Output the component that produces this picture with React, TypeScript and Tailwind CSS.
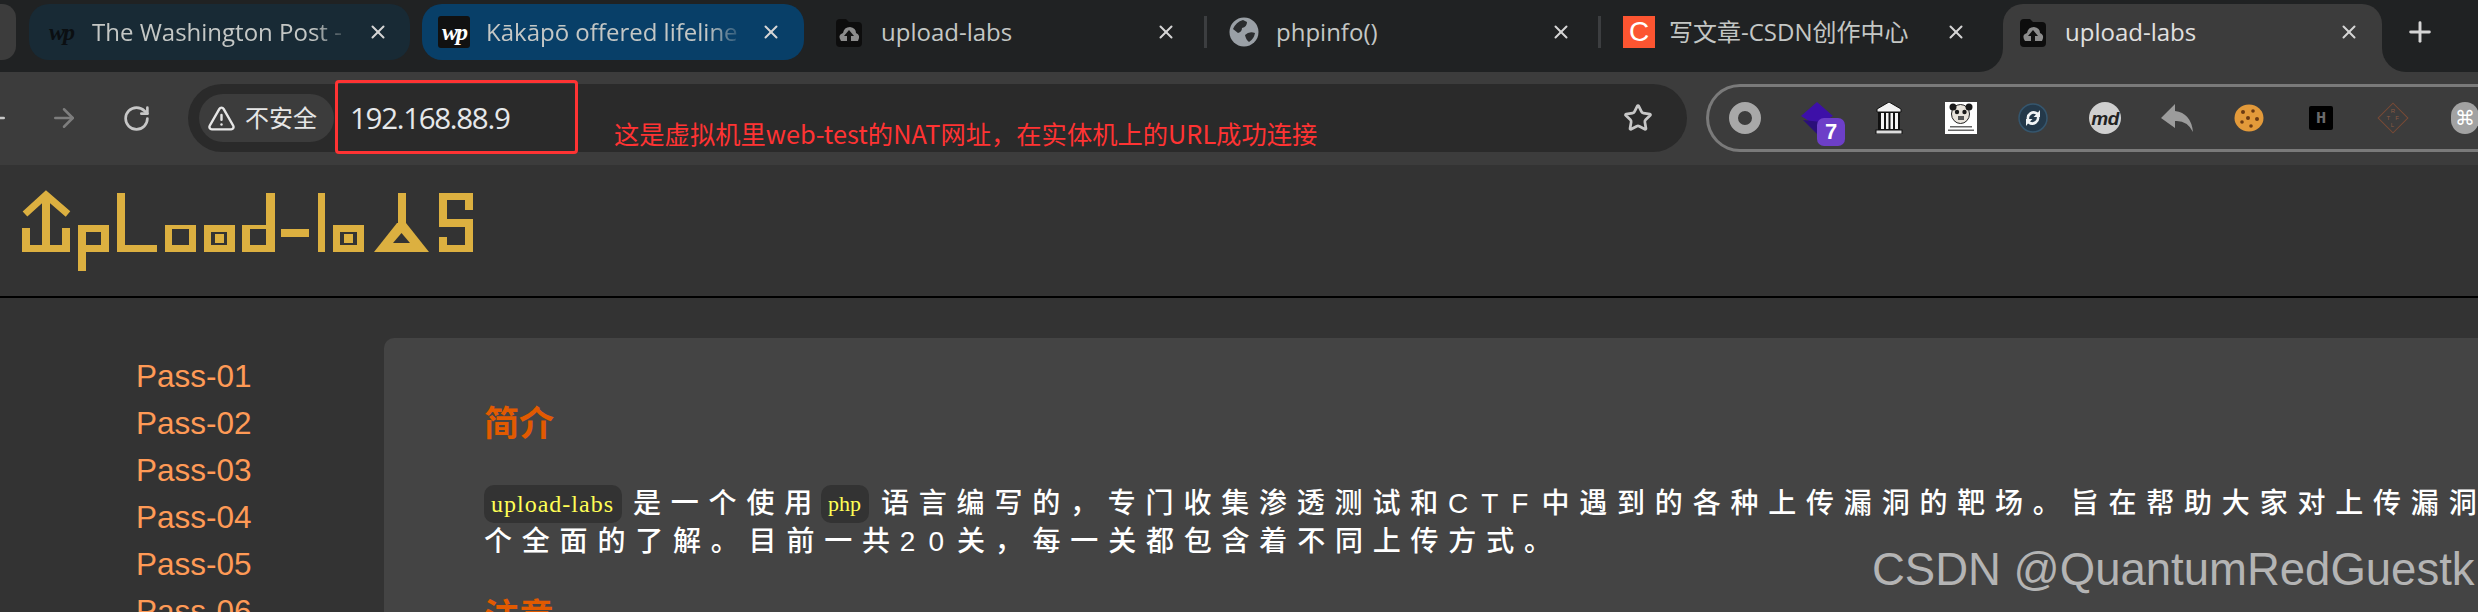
import { ArrowLeft, ArrowRight, Plus, RotateCw, Star, TriangleAlert, X } from "lucide-react";
import type { ReactNode } from "react";

const UI = "font-['Open_Sans','Noto_Sans_CJK_SC',sans-serif]";

function WpIcon({ boxed }: { boxed?: boolean }) {
  return (
    <span
      className={`flex h-8 w-8 shrink-0 items-center justify-center rounded-[3px] font-['Liberation_Serif',serif] text-[24px] font-bold italic leading-none tracking-[-2px] ${
        boxed ? "bg-[#111111] text-white" : "text-[#0b0f12]"
      }`}
    >
      wp
    </span>
  );
}

function LabsIcon() {
  return (
    <svg width="32" height="32" viewBox="0 0 32 32" className="shrink-0">
      <path d="M3 7 Q3 3 7 3 H13 L16 6 H25 Q29 6 29 10 V27 Q29 31 25 31 H7 Q3 31 3 27 Z" fill="#0d0d0d" />
      <path d="M8 25 Q4 19 10 17 Q11 11 17 11 Q23 12 23 17 Q28 19 25 25 Z" fill="#8c8c8c" />
      <path d="M16 14 L21 20 H18 V26 H14 V20 H11 Z" fill="#111111" />
    </svg>
  );
}

function GlobeIcon() {
  return (
    <svg width="32" height="32" viewBox="0 0 32 32" className="shrink-0">
      <circle cx="16" cy="16" r="14.5" fill="#9aa0a6" />
      <path d="M15 4 Q8 6 5 13 L10 17 Q14 16 14 12 Q19 11 19 6 Z" fill="#2a2c2e" />
      <path d="M27 17 Q21 15 17 19 Q18 24 21 26 Q26 23 27 17 Z" fill="#2a2c2e" />
    </svg>
  );
}

function CsdnIcon() {
  return (
    <span className="flex h-8 w-8 shrink-0 items-center justify-center bg-[#fc5531] font-['Liberation_Sans',sans-serif] text-[28px] leading-none text-white">
      C
    </span>
  );
}

function Tab({
  icon,
  title,
  className,
  fade,
  titleClass = "ml-4",
  closeClass = "ml-1",
  children,
}: {
  icon: ReactNode;
  title: string;
  className: string;
  fade?: boolean;
  titleClass?: string;
  closeClass?: string;
  children?: ReactNode;
}) {
  return (
    <div className={`relative flex h-14 shrink-0 items-center ${className}`}>
      {icon}
      <span
        className={`${titleClass} w-[270px] overflow-hidden whitespace-nowrap text-[24px] leading-[30px] ${
          fade ? "[mask-image:linear-gradient(to_right,black_82%,transparent_96%)]" : ""
        }`}
      >
        {title}
      </span>
      <X size={22} strokeWidth={2.2} className={`${closeClass} shrink-0 text-[#d5d5d5]`} />
      {children}
    </div>
  );
}

function Sep({ className }: { className: string }) {
  return <span className={`mt-[12px] h-8 w-[3px] shrink-0 self-start bg-[#3c3e40] ${className}`} />;
}

function Slot({ children }: { children: ReactNode }) {
  return <div className="relative flex h-[62px] w-[72px] shrink-0 items-center justify-center">{children}</div>;
}

function Extensions() {
  return (
    <div className="ml-[19px] flex h-[68px] w-[900px] shrink-0 items-center rounded-l-[34px] border-[3px] border-r-0 border-[#7a7a7a]">
      <Slot>
        <svg width="32" height="32" viewBox="0 0 32 32">
          <circle cx="16" cy="16" r="11.5" fill="none" stroke="#a8a8a8" strokeWidth="9" />
        </svg>
      </Slot>
      <Slot>
        <svg width="32" height="32" viewBox="0 0 32 32">
          <path d="M16 0 L32 14 L16 24 L0 14 Z" fill="#3d10a8" />
          <path d="M2 18 L16 32 L20 20 Z" fill="#2a0f7a" />
        </svg>
        <span className="absolute left-[36px] top-[31px] flex h-7 w-7 items-center justify-center rounded-[7px] bg-[#6d3fc8] font-['Liberation_Sans',sans-serif] text-[22px] font-bold leading-none text-white">
          7
        </span>
      </Slot>
      <Slot>
        <svg width="28" height="32" viewBox="0 0 28 32">
          <path d="M14 0 L26 7 V10 H2 V7 Z" fill="#f2f2f2" stroke="#111" strokeWidth="1" />
          <rect x="3" y="10" width="22" height="18" fill="#111" />
          <rect x="6" y="11" width="3" height="16" fill="#f2f2f2" />
          <rect x="11" y="11" width="2.5" height="16" fill="#f2f2f2" />
          <rect x="15.5" y="11" width="2.5" height="16" fill="#f2f2f2" />
          <rect x="20" y="11" width="3" height="16" fill="#f2f2f2" />
          <rect x="1" y="28" width="26" height="4" fill="#dddddd" stroke="#111" strokeWidth="1" />
        </svg>
      </Slot>
      <Slot>
        <svg width="32" height="32" viewBox="0 0 32 32">
          <rect width="32" height="32" fill="#ffffff" />
          <ellipse cx="15.5" cy="12" rx="9" ry="9.5" fill="#e9e4dc" stroke="#222" strokeWidth="1" />
          <circle cx="8" cy="5" r="3.5" fill="#1a1a1a" />
          <circle cx="24" cy="5" r="3.5" fill="#1a1a1a" />
          <circle cx="12" cy="10" r="2.2" fill="#1a1a1a" />
          <circle cx="19.5" cy="10" r="2.2" fill="#1a1a1a" />
          <rect x="13" y="14" width="6" height="4" fill="#555" />
          <rect x="5" y="24" width="22" height="1.5" fill="#666" />
          <rect x="3" y="27.5" width="26" height="1.5" fill="#666" />
        </svg>
      </Slot>
      <Slot>
        <svg width="30" height="30" viewBox="0 0 30 30">
          <circle cx="15" cy="15" r="14" fill="#24394a" stroke="#35566e" strokeWidth="1.5" />
          <path d="M9 17 A7 7 0 0 1 20 9.5 L22 7 V14 H15.5 L18 11.5 A4.5 4.5 0 0 0 11.5 17 Z" fill="#f1f4f6" />
          <path d="M21 13 A7 7 0 0 1 10 20.5 L8 23 V16 H14.5 L12 18.5 A4.5 4.5 0 0 0 18.5 13 Z" fill="#f1f4f6" />
        </svg>
      </Slot>
      <Slot>
        <span className="flex h-8 w-8 items-center justify-center rounded-full bg-[#cfcfcf] font-['Liberation_Sans',sans-serif] text-[19px] font-bold italic leading-none tracking-[-0.5px] text-[#222222]">
          md
        </span>
      </Slot>
      <Slot>
        <svg width="32" height="28" viewBox="0 0 32 28">
          <path d="M14 0 L0 14 L14 24 V17 Q26 16 32 28 Q30 9 14 7 Z" fill="#9c9c9c" />
        </svg>
      </Slot>
      <Slot>
        <svg width="30" height="28" viewBox="0 0 30 28">
          <ellipse cx="15" cy="14" rx="14.5" ry="13.5" fill="#e39a3a" />
          <circle cx="9" cy="8" r="2" fill="#6b3a12" />
          <circle cx="19" cy="7" r="1.8" fill="#6b3a12" />
          <circle cx="14" cy="14" r="2" fill="#6b3a12" />
          <circle cx="23" cy="15" r="2" fill="#6b3a12" />
          <circle cx="8" cy="18" r="1.8" fill="#6b3a12" />
          <circle cx="17" cy="22" r="1.8" fill="#6b3a12" />
        </svg>
      </Slot>
      <Slot>
        <span className="flex h-6 w-6 items-center justify-center rounded-[2px] bg-black font-['Liberation_Mono',monospace] text-[17px] font-bold leading-none text-[#6a6a6a]">
          H
        </span>
      </Slot>
      <Slot>
        <span className="relative flex h-8 w-8 items-center justify-center">
          <span className="absolute h-[22px] w-[22px] rotate-45 border border-[#7a4a35]" />
          <span className="relative grid grid-cols-3 grid-rows-3 font-['Liberation_Sans',sans-serif] text-[6px] leading-[7px] text-[#8a5a42]">
            <span />
            <span>R</span>
            <span />
            <span>T</span>
            <span />
            <span>F</span>
            <span />
            <span>L</span>
            <span />
          </span>
        </span>
      </Slot>
      <Slot>
        <span className="flex h-8 w-[28px] items-center justify-center rounded-full bg-[#a2a2a2] font-['DejaVu_Sans',sans-serif] text-[20px] leading-none text-white">
          ⌘
        </span>
      </Slot>
    </div>
  );
}

function Logo() {
  const c = "#dcb040";
  const boxes: [number, number, number, number][] = [
    [42, 195, 8, 57], [22, 228, 8, 24], [62, 228, 8, 24], [22, 245, 48, 7],
    [78, 225, 8, 46], [78, 225, 31, 7], [101, 225, 8, 27], [78, 245, 31, 7],
    [117, 193, 8, 59], [117, 245, 40, 7],
    [165, 225, 31, 27], [204, 225, 31, 27], [242, 225, 33, 27], [266, 193, 9, 59],
    [281, 229, 28, 8], [318, 193, 7, 59], [333, 225, 31, 27],
    [398, 193, 8, 34],
    [439, 193, 34, 7], [439, 193, 8, 34], [439, 219, 34, 8], [465, 193, 8, 17], [465, 219, 8, 33], [439, 245, 34, 7], [439, 237, 8, 15],
  ];
  const holes: [number, number, number, number][] = [
    [172, 229, 17, 16], [211, 232, 16, 13], [250, 229, 16, 16], [340, 232, 17, 13],
  ];
  const dots: [number, number, number, number][] = [[215, 234, 9, 9], [344, 234, 9, 9]];
  return (
    <svg width="460" height="85" viewBox="20 190 460 85" role="img" aria-label="upload-labs logo" className="ml-5 block">
      <path d="M25 214 L46 195 L68 214" fill="none" stroke={c} strokeWidth="7" />
      {boxes.map(([x, y, w, h], i) => <rect key={i} x={x} y={y} width={w} height={h} fill={c} />)}
      {holes.map(([x, y, w, h], i) => <rect key={i} x={x} y={y} width={w} height={h} fill="#333333" />)}
      {dots.map(([x, y, w, h], i) => <rect key={i} x={x} y={y} width={w} height={h} fill={c} />)}
      <path d="M397 223 H406 L429 252 H374 Z" fill={c} />
      <path d="M401.5 233 L410 243 H393 Z" fill="#333333" />
    </svg>
  );
}

function Chip({ children, className }: { children: string; className: string }) {
  return (
    <span className={`inline-block h-[38px] rounded-[10px] bg-[#333333] px-[7px] align-top font-['Liberation_Serif',serif] font-normal leading-[38px] text-[#ffff55] ${className}`}>
      {children}
    </span>
  );
}

function Latin({ children }: { children: string }) {
  return <span className="tracking-[13px]">{children}</span>;
}

export default function App() {
  const passes = ["Pass-01", "Pass-02", "Pass-03", "Pass-04", "Pass-05", "Pass-06"];
  return (
    <div className={`relative h-[612px] w-[2478px] overflow-hidden bg-[#333333] ${UI}`}>
      {/* tab strip */}
      <div className="flex h-[72px] items-start overflow-hidden bg-[#202223] pt-1 text-[#c4c7c5]">
        <div className="h-14 w-4 shrink-0 rounded-r-[14px] bg-[#3c3c3c]" />
        <Tab
          fade
          icon={<WpIcon />}
          title="The Washington Post -"
          titleClass="ml-[15px]"
          closeClass="ml-[5px]"
          className="ml-[13px] w-[381px] rounded-[20px] bg-[#182a35] pl-4"
        />
        <Tab
          fade
          icon={<WpIcon boxed />}
          title="Kākāpō offered lifeline"
          className="ml-3 w-[382px] rounded-[20px] bg-[#083f68] pl-4"
        />
        <Tab icon={<LabsIcon />} title="upload-labs" className="ml-[13px] w-[381px] pl-4" />
        <Sep className="ml-[6px] mr-[5px]" />
        <Tab icon={<GlobeIcon />} title="phpinfo()" className="w-[381px] pl-4" />
        <Sep className="ml-[5px] mr-[6px]" />
        <Tab icon={<CsdnIcon />} title="写文章-CSDN创作中心" titleClass="ml-[14px]" closeClass="ml-[6px]" className="w-[382px] pl-4" />
        <Tab
          icon={<LabsIcon />}
          title="upload-labs"
          closeClass="ml-[3px]"
          className="ml-[14px] h-[68px] w-[379px] rounded-t-[20px] bg-[#3c3c3c] pb-3 pl-[14px] text-[#e0e0e0]"
        >
          <span className="absolute bottom-0 left-[-24px] h-6 w-6 bg-[#3c3c3c]">
            <span className="block h-6 w-6 rounded-br-[24px] bg-[#202223]" />
          </span>
          <span className="absolute bottom-0 right-[-24px] h-6 w-6 bg-[#3c3c3c]">
            <span className="block h-6 w-6 rounded-bl-[24px] bg-[#202223]" />
          </span>
        </Tab>
        <Plus size={32} strokeWidth={2.2} className="ml-[22px] mt-[12px] shrink-0 text-[#d5d5d5]" />
      </div>

      {/* toolbar */}
      <div className="relative flex h-[93px] items-start overflow-hidden bg-[#3c3c3c] pt-3">
        <div className="relative flex h-[68px] w-[188px] shrink-0 items-center">
          <ArrowLeft size={30} strokeWidth={2} className="absolute left-[-20px] text-[#c7c7c7]" />
          <ArrowRight size={30} strokeWidth={2} className="absolute left-[49px] text-[#7d7d7d]" />
          <RotateCw size={29} strokeWidth={2.2} className="absolute left-[122px] text-[#c7c7c7]" />
        </div>
        <div className="flex h-[68px] w-[1499px] shrink-0 items-center rounded-[34px] bg-[#2a2a2a] pl-[11px]">
          <div className="flex h-12 w-[135px] items-center rounded-[24px] bg-[#3c3c3c] pl-[8px] text-[#e6e6e6]">
            <TriangleAlert size={29} strokeWidth={2} />
            <span className="ml-[9px] text-[24px] leading-none">不安全</span>
          </div>
          <span className="ml-4 font-['Open_Sans',sans-serif] text-[29.5px] leading-none tracking-[-1.3px] text-[#e6e8ea]">
            192.168.88.9
          </span>
          <Star size={30} strokeWidth={2.2} className="ml-auto mr-[34px] text-[#c7c7c7]" />
        </div>
        <Extensions />
        <div className="absolute left-[335px] top-[8px] h-[74px] w-[243px] rounded-[4px] border-[3px] border-[#ff3333]" />
        <span className="absolute left-[614px] top-[48px] whitespace-nowrap font-['Noto_Sans_CJK_SC',sans-serif] text-[25.3px] leading-[26px] text-[#ff3333]">
          这是虚拟机里web-test的NAT网址，在实体机上的URL成功连接
        </span>
      </div>

      {/* page */}
      <div className="h-[133px] border-b-2 border-black bg-[#333333] pt-[25px]">
        <Logo />
      </div>
      <div className="flex">
        <div className="w-[384px] shrink-0 pl-[136px] pt-[55px] font-['Liberation_Sans',sans-serif] text-[31.5px] leading-[47px] text-[#ff9a56]">
          {passes.map((p) => (
            <div key={p}>{p}</div>
          ))}
        </div>
        <div className="mt-10 h-[400px] flex-1 rounded-tl-[10px] bg-[#444444] pl-[100px] pt-[65px] font-['Liberation_Sans','Noto_Sans_CJK_SC',sans-serif] text-white">
          <h2 className="font-['Noto_Sans_CJK_SC',sans-serif] text-[35px] font-bold leading-[35px] text-[#e25a00]">简介</h2>
          <div className="mt-[47px] whitespace-nowrap text-[28px] font-medium leading-[37px] tracking-[9.8px]">
            <Chip className="mr-[11px] w-[138px] text-[24px] tracking-[1px]">upload-labs</Chip>
            是一个使用
            <Chip className="ml-[-1px] mr-[12px] w-[48px] text-[22px] tracking-[0px]">php</Chip>
            语言编写的，专门收集渗透测试和<Latin>CTF</Latin>中遇到的各种上传漏洞的靶场。旨在帮助大家对上传漏洞
          </div>
          <div className="whitespace-nowrap text-[28px] font-medium leading-[37px] tracking-[9.8px]">
            个全面的了解。目前一共<Latin>20</Latin>关，每一关都包含着不同上传方式。
          </div>
          <h2 className="mt-9 font-['Noto_Sans_CJK_SC',sans-serif] text-[35px] font-bold leading-[35px] text-[#e25a00]">注意</h2>
        </div>
      </div>
      <span className="absolute left-[1872px] top-[544px] whitespace-nowrap font-['Liberation_Sans',sans-serif] text-[45.5px] leading-[52px] text-[#b4b4b4]">
        CSDN @QuantumRedGuestk
      </span>
    </div>
  );
}
